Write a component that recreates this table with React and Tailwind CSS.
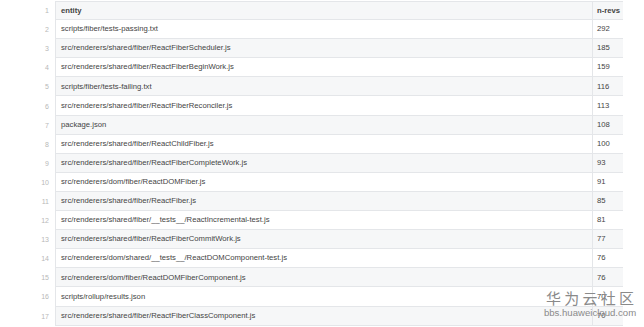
const rows = [
  ["scripts/fiber/tests-passing.txt", "292"],
  ["src/renderers/shared/fiber/ReactFiberScheduler.js", "185"],
  ["src/renderers/shared/fiber/ReactFiberBeginWork.js", "159"],
  ["scripts/fiber/tests-failing.txt", "116"],
  ["src/renderers/shared/fiber/ReactFiberReconciler.js", "113"],
  ["package.json", "108"],
  ["src/renderers/shared/fiber/ReactChildFiber.js", "100"],
  ["src/renderers/shared/fiber/ReactFiberCompleteWork.js", "93"],
  ["src/renderers/dom/fiber/ReactDOMFiber.js", "91"],
  ["src/renderers/shared/fiber/ReactFiber.js", "85"],
  ["src/renderers/shared/fiber/__tests__/ReactIncremental-test.js", "81"],
  ["src/renderers/shared/fiber/ReactFiberCommitWork.js", "77"],
  ["src/renderers/dom/shared/__tests__/ReactDOMComponent-test.js", "76"],
  ["src/renderers/dom/fiber/ReactDOMFiberComponent.js", "76"],
  ["scripts/rollup/results.json", "70"],
  ["src/renderers/shared/fiber/ReactFiberClassComponent.js", "70"],
];

const Row = ({ n, entity, revs, header = false }) => (
  <div className="flex h-[19.1px]">
    <div className="w-[55px] shrink-0 pr-[6px] flex items-center justify-end text-[7px] text-[#b8b8b8]">
      {n}
    </div>
    <div
      className={`w-[568px] flex border-l border-b border-[#e4e6e9] ${
        n % 2 === 1 ? "bg-[#f6f7f8]" : "bg-white"
      } ${header ? "border-t" : ""}`}
    >
      <div
        className={`flex-1 pl-[5px] flex items-center text-[#444] ${
          header ? "font-bold" : ""
        }`}
      >
        {entity}
      </div>
      <div
        className={`w-[31px] border-l border-[#e4e6e9] pl-[4px] flex items-center text-[#444] ${
          header ? "font-bold" : ""
        }`}
      >
        {revs}
      </div>
    </div>
  </div>
);

export default function App() {
  return (
    <div className="relative w-[644px] h-[327px] bg-white overflow-hidden font-['Liberation_Sans',Arial,sans-serif] text-[7.7px] leading-none">
      <div className="pt-px">
        <Row n={1} entity="entity" revs="n-revs" header />
        {rows.map(([e, r], i) => (
          <Row key={i} n={i + 2} entity={e} revs={r} />
        ))}
      </div>

      {/* watermark */}
      <div className="absolute left-[546px] top-[290px] w-[88px] flex flex-col items-center text-[#8a8a8a] whitespace-nowrap">
        <div className="w-full flex justify-between text-[15px] font-['Noto_Sans_CJK_SC',sans-serif] leading-none">
          <span>华</span>
          <span>为</span>
          <span>云</span>
          <span>社</span>
          <span>区</span>
        </div>
        <div className="text-[9.6px] mt-[3px] leading-none font-['Liberation_Sans',Arial,sans-serif]">
          bbs.huaweicloud.com
        </div>
      </div>
    </div>
  );
}
